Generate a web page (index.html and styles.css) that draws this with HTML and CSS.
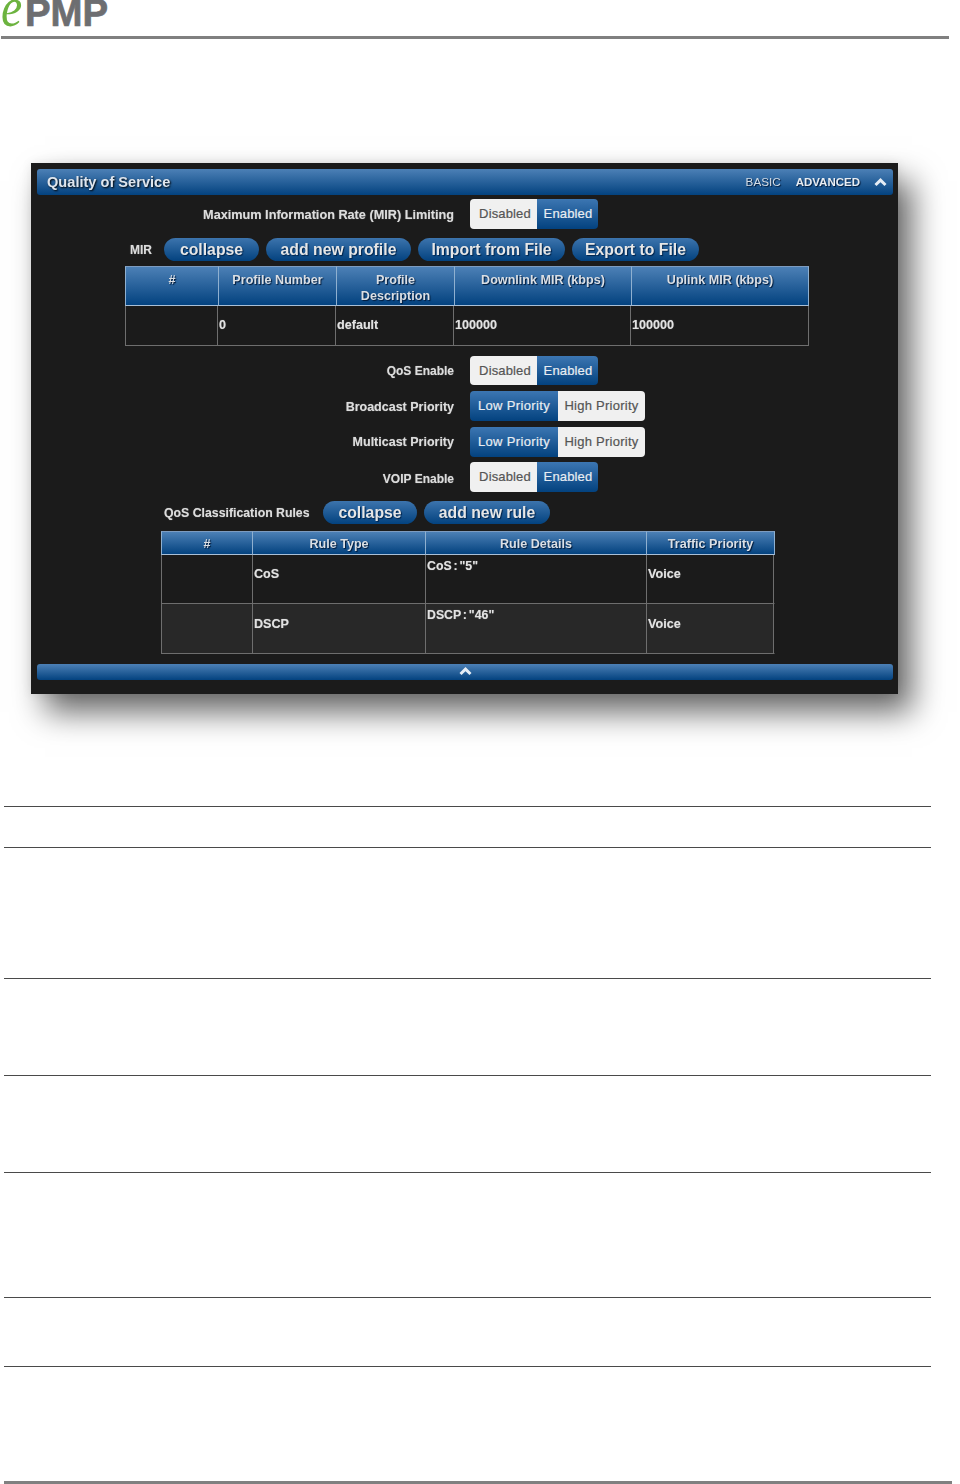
FILE: index.html
```html
<!DOCTYPE html>
<html lang="en">
<head>
<meta charset="utf-8">
<title>ePMP Quality of Service</title>
<link rel="stylesheet" href="styles.css">
</head>
<body>
<div class="page">
  <header class="doc-header">
    <div class="logo"><span class="logo-e">e</span><span class="logo-pmp">PMP</span></div>
  </header>

  <section class="panel">
    <div class="bar title-bar">
      <span class="title">Quality of Service</span>
      <span class="modes">
        <span class="mode">BASIC</span>
        <span class="mode mode-on">ADVANCED</span>
        <svg class="chevron" width="13" height="9" viewBox="0 0 13 9"><path d="M1.5 7 6.5 2.2 11.5 7" fill="none" stroke="#e6edf5" stroke-width="3"/></svg>
      </span>
    </div>

    <div class="setting setting-first">
      <span class="label label-long">Maximum Information Rate (MIR) Limiting</span>
      <div class="toggle"><span class="opt off opt-dis">Disabled</span><span class="opt on opt-en">Enabled</span></div>
    </div>

    <div class="actions actions-mir">
      <span class="actions-label label-mir">MIR</span>
      <button class="pill pill-collapse">collapse</button>
      <button class="pill pill-profile">add new profile</button>
      <button class="pill pill-import">Import from File</button>
      <button class="pill pill-export">Export to File</button>
    </div>

    <table class="grid grid-mir">
      <colgroup><col class="m1"><col class="m2"><col class="m3"><col class="m4"><col class="m5"></colgroup>
      <thead>
        <tr><th>#</th><th>Profile Number</th><th>Profile Description</th><th>Downlink MIR (kbps)</th><th>Uplink MIR (kbps)</th></tr>
      </thead>
      <tbody>
        <tr><td></td><td>0</td><td>default</td><td>100000</td><td>100000</td></tr>
      </tbody>
    </table>

    <div class="setting setting-qos">
      <span class="label label-short">QoS Enable</span>
      <div class="toggle"><span class="opt off opt-dis">Disabled</span><span class="opt on opt-en">Enabled</span></div>
    </div>
    <div class="setting setting-near">
      <span class="label">Broadcast Priority</span>
      <div class="toggle"><span class="opt on opt-low">Low Priority</span><span class="opt off opt-high">High Priority</span></div>
    </div>
    <div class="setting setting-near">
      <span class="label label-up">Multicast Priority</span>
      <div class="toggle"><span class="opt on opt-low">Low Priority</span><span class="opt off opt-high">High Priority</span></div>
    </div>
    <div class="setting setting-voip">
      <span class="label label-short label-down">VOIP Enable</span>
      <div class="toggle"><span class="opt off opt-dis">Disabled</span><span class="opt on opt-en">Enabled</span></div>
    </div>

    <div class="actions actions-rules">
      <span class="actions-label label-rules">QoS Classification Rules</span>
      <button class="pill pill-collapse2">collapse</button>
      <button class="pill pill-rule">add new rule</button>
    </div>

    <table class="grid grid-rules">
      <colgroup><col class="r1"><col class="r2"><col class="r3"><col class="r4"></colgroup>
      <thead>
        <tr><th>#</th><th>Rule Type</th><th>Rule Details</th><th>Traffic Priority</th></tr>
      </thead>
      <tbody>
        <tr><td></td><td>CoS</td><td class="top">CoS : "5"</td><td>Voice</td></tr>
        <tr class="alt"><td></td><td>DSCP</td><td class="top">DSCP : "46"</td><td>Voice</td></tr>
      </tbody>
    </table>

    <div class="bar foot-bar">
      <svg class="chevron" width="13" height="9" viewBox="0 0 13 9"><path d="M1.5 7 6.5 2.2 11.5 7" fill="none" stroke="#e6edf5" stroke-width="3"/></svg>
    </div>
  </section>

  <div class="rules">
    <div class="rule r-41"></div>
    <div class="rule r-131"></div>
    <div class="rule r-97"></div>
    <div class="rule r-97"></div>
    <div class="rule r-125"></div>
    <div class="rule r-69"></div>
    <div class="rule"></div>
  </div>

  <footer class="doc-footer"></footer>
</div>
</body>
</html>
```
FILE: styles.css
```css
* { box-sizing: border-box; }
html, body { margin: 0; padding: 0; background: #fff; }
body { font-family: "Liberation Sans", Arial, sans-serif; }

.page {
  width: 960px;
  height: 1484px;
  overflow: hidden;
  display: flex;
  flex-direction: column;
}

.doc-header {
  width: 948px;
  height: 39px;
  margin-left: 1px;
  border-bottom: 3px solid #808080;
  flex: none;
  overflow: hidden;
}
.logo { display: flex; align-items: baseline; height: 36px; line-height: 36px; margin-top: -10px; white-space: nowrap; }
.logo-e {
  font-family: "Liberation Serif", serif;
  font-style: italic;
  font-size: 53px;
  color: #6cb33f;
  width: 24px;
  display: inline-block;
  transform: scale(.9, 1.08);
  transform-origin: 0 100%;
}
.logo-pmp {
  font-weight: 700;
  font-size: 38.4px;
  color: #6d6e71;
  -webkit-text-stroke: .7px #6d6e71;
}

.panel {
  flex: none;
  width: 867px;
  height: 531px;
  margin: 124px 0 0 31px;
  padding: 6px 5px 0 6px;
  background: #1b1b1b;
  box-shadow: 14px 18px 30px rgba(0, 0, 0, .6), 0 0 10px rgba(0, 0, 0, .08);
}
.panel > * { filter: blur(.3px); }

.bar {
  background: linear-gradient(#4c80b6, #03427f);
  border-radius: 3px;
  color: #e6e6e6;
}
.title-bar {
  height: 26px;
  display: flex;
  align-items: center;
  justify-content: space-between;
  padding: 0 6px 0 10px;
}
.title {
  font-size: 14.6px;
  font-weight: 700;
  text-shadow: 1px 1px 2px #000;
  color: #dfe6ee;
}
.modes { display: flex; align-items: center; font-size: 11.7px; }
.mode { color: #d5dde6; text-shadow: 1px 1px 1px #001a3a; margin: 0 15px 1px 0; }
.mode-on { font-weight: 700; font-size: 11.5px; color: #e8edf2; margin-right: 14px; }

.setting {
  display: grid;
  grid-template-columns: 417px auto;
  column-gap: 16px;
  align-items: center;
  height: 30px;
}
.setting-first { margin-top: 4px; }
.setting-qos { margin-top: 10px; height: 29px; }
.setting-qos .toggle { height: 29px; }
.setting-near { margin-top: 6px; }
.setting-voip { margin-top: 5px; }

.label, .actions-label {
  font-size: 12.5px;
  font-weight: 700;
  color: #dcdcdc;
  text-shadow: 0 0 1px #888;
  white-space: nowrap;
}
.label { text-align: right; padding-top: 1px; }
.label-long { font-size: 12.7px; }
.label-short { font-size: 12px; }
.label-up { padding-top: 0; padding-bottom: 1px; }
.label-down { padding-top: 3px; }

.toggle {
  display: flex;
  height: 30px;
  width: max-content;
  border-radius: 4px;
  overflow: hidden;
  font-size: 13px;
  letter-spacing: .15px;
  font-weight: 400;
}
.opt { display: flex; align-items: center; justify-content: center; padding-bottom: 1px; -webkit-text-stroke: .2px currentColor; white-space: nowrap; }
.opt.off { background: #f0f0f0; color: #555; }
.opt.on { background: linear-gradient(#3c76b2, #03427f); color: #e8edf2; }
.opt-dis { width: 67px; padding-left: 3px; }
.opt-en { width: 61px; padding-left: 1px; }
.opt-low { width: 88px; letter-spacing: .35px; }
.opt-high { width: 87px; letter-spacing: .25px; }

.actions { display: flex; align-items: center; height: 23px; }
.actions-mir { margin-top: 9px; padding-left: 93px; }
.actions-rules { margin-top: 9px; padding-left: 127px; }
.label-mir { width: 34px; font-size: 12px; }
.label-rules { width: 159px; font-size: 12.3px; padding-top: 1px; }

.pill {
  height: 23px;
  margin: 0 7px 0 0;
  padding: 0;
  border: 0;
  border-radius: 12px;
  background: linear-gradient(#3c74ad, #03427f);
  color: #e6e6e6;
  font-family: inherit;
  font-size: 15.8px;
  font-weight: 700;
  text-shadow: 1px 1px 1px #00234a;
  white-space: nowrap;
}
.pill-collapse { width: 95px; }
.pill-profile { width: 145px; }
.pill-import { width: 147px; margin-right: 7px; }
.pill-export { width: 127px; }
.pill-collapse2 { width: 94px; padding-top: 1px; }
.pill-rule { width: 126px; padding-top: 1px; }

.grid {
  border-collapse: separate;
  border-spacing: 0;
  table-layout: fixed;
  font-size: 12.6px;
  font-weight: 700;
}
.grid th {
  padding: 0 8px;
  vertical-align: top;
  text-align: center;
  color: #dbdfe4;
  background: linear-gradient(#4c80b6, #03427f);
  border-top: 1px solid #7d9cc0;
  border-left: 1px solid #8fb0d0;
  border-bottom: 1px solid #a9bfd6;
  text-shadow: 1px 1px 1px #001a3a;
  line-height: 16px;
  font-weight: 700;
}
.grid th:last-child { border-right: 1px solid #8fb0d0; }
.grid td {
  padding: 0 0 0 1px;
  color: #e2e2e2;
  border-right: 1px solid #6e6e6e;
  border-bottom: 1px solid #6e6e6e;
  vertical-align: middle;
  text-shadow: 0 0 1px #888;
}
.grid td:first-child { border-left: 1px solid #6e6e6e; }
.grid td.top { vertical-align: top; padding-top: 4px; line-height: 14px; word-spacing: -1.5px; font-size: 12.3px; }
.grid .alt td { background: #282828; }

.grid-mir { width: 684px; margin: 5px 0 0 88px; }
.grid-mir th { height: 40px; padding-top: 5px; }
.grid-mir td { height: 40px; padding-bottom: 2px; }
.m1 { width: 93px; }
.m2 { width: 118px; }
.m3 { width: 118px; }
.m4 { width: 177px; }
.m5 { width: 178px; }

.grid-rules { width: 614px; margin: 7px 0 0 124px; }
.grid-rules th { height: 24px; padding-top: 4px; }
.grid-rules td { height: 49px; padding-bottom: 10px; border-right: 0; border-left: 1px solid #6e6e6e; }
.grid-rules td.top { padding-bottom: 0; }
.grid-rules td:last-child {
  border-right: 1px solid #1b1b1b;
  box-shadow: inset -1px 0 #6e6e6e;
}
.grid-rules .alt td { height: 50px; }
.r1 { width: 91px; }
.r2 { width: 173px; }
.r3 { width: 221px; }
.r4 { width: 129px; }

.foot-bar {
  height: 16px;
  margin-top: 10px;
  display: flex;
  justify-content: center;
  padding-top: 3px;
  align-items: flex-start;
}
.foot-bar .chevron { margin-left: 1px; }

.rules { margin: 112px 0 0 4px; width: 927px; flex: none; }
.rule { border-top: 1px solid #4a4a4a; }
.r-41 { height: 41px; }
.r-131 { height: 131px; }
.r-97 { height: 97px; }
.r-125 { height: 125px; }
.r-69 { height: 69px; }

.doc-footer {
  margin: auto 0 0 4px;
  width: 948px;
  height: 3px;
  background: #808080;
  flex: none;
}
```
